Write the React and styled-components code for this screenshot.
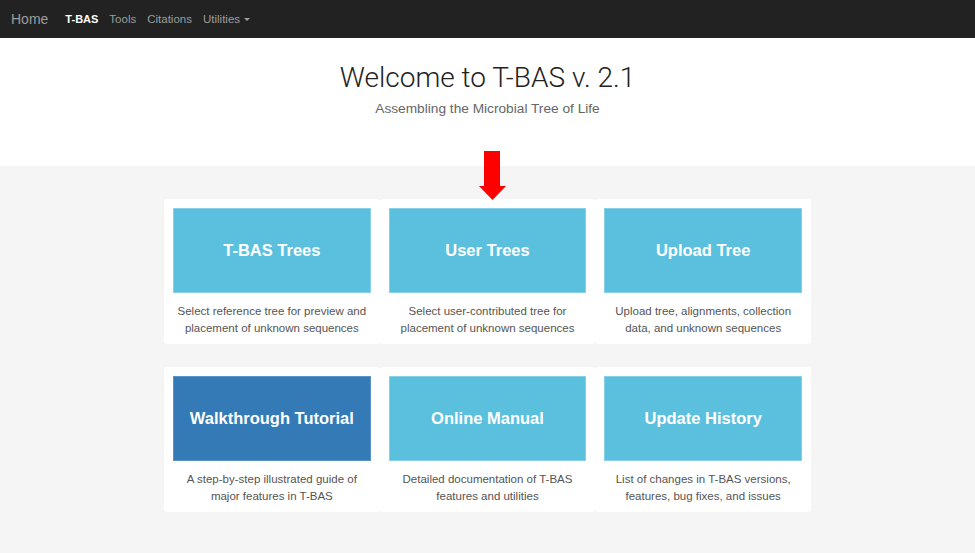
import React from "react";
import styled, { createGlobalStyle } from "styled-components";

const Global = createGlobalStyle`
  html, body { margin: 0; padding: 0; background: #f5f5f5; }
  body { font-family: "Liberation Sans", Arial, sans-serif; color: #333; }
  * { box-sizing: border-box; }
`;

const Page = styled.div`
  width: 975px;
  min-height: 553px;
  background: #f5f5f5;
  position: relative;
  overflow: hidden;
`;

const Navbar = styled.nav`
  height: 38px;
  background: #222;
  display: flex;
  align-items: center;
  padding-left: 11px;
`;

const Brand = styled.a`
  font-size: 14px;
  color: #9d9d9d;
  margin-right: 17px;
  text-decoration: none;
`;

const NavList = styled.ul`
  display: flex;
  align-items: center;
  gap: 11px;
  list-style: none;
  margin: 0;
  padding: 0;
`;

const NavItem = styled.li`
  font-size: ${(p) => (p.$active ? "11px" : "11.5px")};
  color: ${(p) => (p.$active ? "#fff" : "#9d9d9d")};
  font-weight: ${(p) => (p.$active ? "bold" : "normal")};
  display: flex;
  align-items: center;
`;

const Caret = styled.span`
  display: inline-block;
  width: 0;
  height: 0;
  margin-left: 4px;
  border-top: 3px solid #9d9d9d;
  border-left: 3px solid transparent;
  border-right: 3px solid transparent;
`;

const Header = styled.header`
  background: #fff;
  height: 128px;
  padding-top: 24px;
  text-align: center;
`;

const Title = styled.h1`
  margin: 0;
  font-family: Roboto, "Liberation Sans", sans-serif;
  font-weight: 300;
  font-size: 28px;
  line-height: 31px;
  color: #222;
`;

const Subtitle = styled.p`
  margin: 6px 0 0;
  font-size: 13.7px;
  line-height: 20px;
  color: #666;
`;

const Arrow = styled.svg`
  position: absolute;
  left: 479px;
  top: 151px;
`;

const Cards = styled.section`
  padding-top: 33px;
  display: flex;
  flex-direction: column;
  gap: 23px;
  align-items: center;
`;

const Row = styled.div`
  width: 647px;
  display: grid;
  grid-template-columns: repeat(3, 1fr);
`;

const Card = styled.div`
  background: #fff;
  border-radius: 3px;
  padding: 9px 9px 7px;
  text-align: center;
`;

const Tile = styled.div`
  height: 85px;
  background: ${(p) => (p.$primary ? "#337ab7" : "#5bc0de")};
  border: 1px solid ${(p) => (p.$primary ? "#5a93c5" : "#86d1e8")};
  display: flex;
  align-items: center;
  justify-content: center;
  color: #fff;
  font-weight: bold;
  font-size: 16.5px;
`;

const Desc = styled.p`
  margin: 10px 0 0;
  font-size: 11.5px;
  line-height: 17px;
  color: #555;
`;

const rows = [
  [
    { t: "T-BAS Trees", d: ["Select reference tree for preview and", "placement of unknown sequences"] },
    { t: "User Trees", d: ["Select user-contributed tree for", "placement of unknown sequences"] },
    { t: "Upload Tree", d: ["Upload tree, alignments, collection", "data, and unknown sequences"] },
  ],
  [
    { t: "Walkthrough Tutorial", p: true, d: ["A step-by-step illustrated guide of", "major features in T-BAS"] },
    { t: "Online Manual", d: ["Detailed documentation of T-BAS", "features and utilities"] },
    { t: "Update History", d: ["List of changes in T-BAS versions,", "features, bug fixes, and issues"] },
  ],
];

export default function App() {
  return (
    <Page>
      <Global />
      <Navbar>
        <Brand>Home</Brand>
        <NavList>
          <NavItem $active>T-BAS</NavItem>
          <NavItem>Tools</NavItem>
          <NavItem>Citations</NavItem>
          <NavItem>
            Utilities<Caret />
          </NavItem>
        </NavList>
      </Navbar>
      <Header>
        <Title>Welcome to T-BAS v. 2.1</Title>
        <Subtitle>Assembling the Microbial Tree of Life</Subtitle>
      </Header>
      <Arrow width="27" height="49" viewBox="0 0 27 49">
        <polygon points="5,0 21,0 21,35 27,35 13.5,49 0,35 5,35" fill="#ff0000" />
      </Arrow>
      <Cards>
        {rows.map((r, i) => (
          <Row key={i}>
            {r.map((c) => (
              <Card key={c.t}>
                <Tile $primary={c.p}>{c.t}</Tile>
                <Desc>
                  {c.d[0]}
                  <br />
                  {c.d[1]}
                </Desc>
              </Card>
            ))}
          </Row>
        ))}
      </Cards>
    </Page>
  );
}
